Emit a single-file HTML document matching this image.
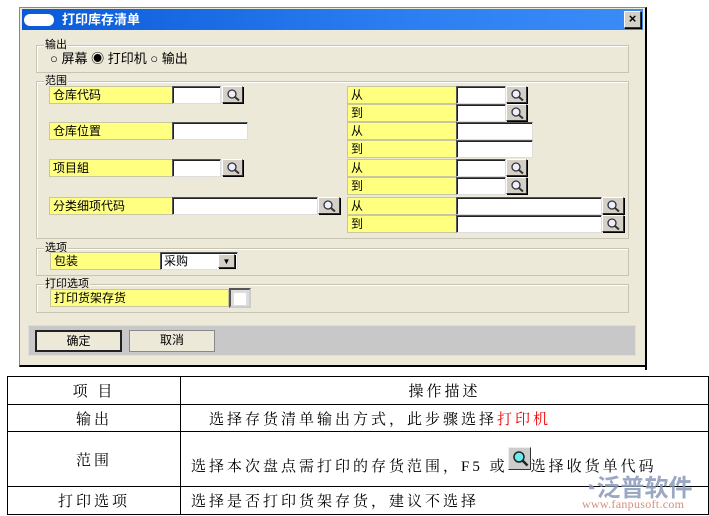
<!DOCTYPE html><html><head><meta charset="utf-8"><style>
*{margin:0;padding:0;box-sizing:border-box}
body{width:709px;height:516px;background:#fff;position:relative;overflow:hidden;font-family:"Liberation Sans","Noto Sans CJK SC",sans-serif;font-size:12px;color:#000}
.a{position:absolute}
.dlg{left:19px;top:7px;width:628px;height:360px;background:#ece9d8;border:1px solid #888;border-right:2px solid #000;border-bottom:2px solid #000}
.title{left:22px;top:9px;width:621px;height:21px;background:linear-gradient(90deg,#0a5ad8,#2b7ef0 60%,#3a8cf8);color:#fff;font-weight:bold;font-size:13px;line-height:21px}
.grp{border:1px solid #c8c4b4;box-shadow:inset 1px 1px 0 #fff}
.lg{background:#ece9d8;padding:0 1px;line-height:12px;font-size:11px}
.y{background:#ffff80;border:1px solid #c8c8a0;line-height:16px;padding-left:3px;font-size:12px}
.in{background:#fff;border:1px solid #555;border-right-color:#ddd;border-bottom-color:#ddd;box-shadow:inset 1px 1px 0 #222}
.sb{background:#d4d0c8;border:1px solid #333;border-left-color:#fff;border-top-color:#fff;box-shadow:1px 1px 0 #000}
.sb svg{position:absolute;left:3px;top:2px}
.btn{background:#ece9d8;border:1px solid #888;text-align:center;line-height:19px;font-size:12px}
table{position:absolute;left:7px;top:376px;width:702px;border-collapse:collapse;font-family:"Liberation Serif","Noto Serif CJK SC",serif;font-size:15px;letter-spacing:3px}
td{border:1.5px solid #000;text-align:center;padding:0}
</style></head><body>
<div class="a dlg"></div>
<div class="a title"><span class="a" style="left:2px;top:5px;width:30px;height:12px;background:#fff;border-radius:6px"></span><span class="a" style="left:40px;top:0">打印库存清单</span></div>
<div class="a sb" style="left:624px;top:11px;width:17px;height:17px;text-align:center;line-height:14px;font-weight:bold;font-size:13px">×</div>

<div class="a grp" style="left:36px;top:45px;width:593px;height:28px"></div>
<div class="a lg" style="left:44px;top:39px">输出</div>
<div class="a" style="left:50px;top:51px;font-size:13px;line-height:15px">○ 屏幕 ◉ 打印机 ○ 输出</div>

<div class="a grp" style="left:36px;top:81px;width:593px;height:158px"></div>
<div class="a lg" style="left:44px;top:75px">范围</div>

<div class="a y" style="left:49px;top:86px;width:124px;height:18px">仓库代码</div>
<div class="a in" style="left:172px;top:86px;width:49px;height:18px"></div>
<div class="a sb" style="left:222px;top:86px;width:21px;height:17px"><svg width="14" height="12"><circle cx="6" cy="5" r="4" fill="#eef" stroke="#333" stroke-width="1.3"/><path d="M9 8l4 3.5" stroke="#333" stroke-width="2"/></svg></div>
<div class="a y" style="left:49px;top:122px;width:124px;height:18px">仓库位置</div>
<div class="a in" style="left:172px;top:122px;width:76px;height:18px"></div>
<div class="a y" style="left:49px;top:159px;width:124px;height:18px">项目組</div>
<div class="a in" style="left:172px;top:159px;width:49px;height:18px"></div>
<div class="a sb" style="left:222px;top:159px;width:21px;height:17px"><svg width="14" height="12"><circle cx="6" cy="5" r="4" fill="#eef" stroke="#333" stroke-width="1.3"/><path d="M9 8l4 3.5" stroke="#333" stroke-width="2"/></svg></div>
<div class="a y" style="left:49px;top:197px;width:124px;height:18px">分类细项代码</div>
<div class="a in" style="left:172px;top:197px;width:146px;height:18px"></div>
<div class="a sb" style="left:318px;top:197px;width:22px;height:17px"><svg width="14" height="12"><circle cx="6" cy="5" r="4" fill="#eef" stroke="#333" stroke-width="1.3"/><path d="M9 8l4 3.5" stroke="#333" stroke-width="2"/></svg></div>

<div class="a y" style="left:347px;top:86px;width:110px;height:18px">从</div>
<div class="a y" style="left:347px;top:104px;width:110px;height:18px">到</div>
<div class="a y" style="left:347px;top:122px;width:110px;height:18px">从</div>
<div class="a y" style="left:347px;top:140px;width:110px;height:18px">到</div>
<div class="a y" style="left:347px;top:159px;width:110px;height:18px">从</div>
<div class="a y" style="left:347px;top:177px;width:110px;height:18px">到</div>
<div class="a y" style="left:347px;top:197px;width:110px;height:18px">从</div>
<div class="a y" style="left:347px;top:215px;width:110px;height:18px">到</div>
<div class="a in" style="left:456px;top:86px;width:50px;height:18px"></div>
<div class="a in" style="left:456px;top:104px;width:50px;height:18px"></div>
<div class="a in" style="left:456px;top:122px;width:77px;height:18px"></div>
<div class="a in" style="left:456px;top:140px;width:77px;height:18px"></div>
<div class="a in" style="left:456px;top:159px;width:50px;height:18px"></div>
<div class="a in" style="left:456px;top:177px;width:50px;height:18px"></div>
<div class="a in" style="left:456px;top:197px;width:146px;height:18px"></div>
<div class="a in" style="left:456px;top:215px;width:146px;height:18px"></div>
<div class="a sb" style="left:506px;top:86px;width:21px;height:17px"><svg width="14" height="12"><circle cx="6" cy="5" r="4" fill="#eef" stroke="#333" stroke-width="1.3"/><path d="M9 8l4 3.5" stroke="#333" stroke-width="2"/></svg></div>
<div class="a sb" style="left:506px;top:104px;width:21px;height:17px"><svg width="14" height="12"><circle cx="6" cy="5" r="4" fill="#eef" stroke="#333" stroke-width="1.3"/><path d="M9 8l4 3.5" stroke="#333" stroke-width="2"/></svg></div>
<div class="a sb" style="left:506px;top:159px;width:21px;height:17px"><svg width="14" height="12"><circle cx="6" cy="5" r="4" fill="#eef" stroke="#333" stroke-width="1.3"/><path d="M9 8l4 3.5" stroke="#333" stroke-width="2"/></svg></div>
<div class="a sb" style="left:506px;top:177px;width:21px;height:17px"><svg width="14" height="12"><circle cx="6" cy="5" r="4" fill="#eef" stroke="#333" stroke-width="1.3"/><path d="M9 8l4 3.5" stroke="#333" stroke-width="2"/></svg></div>
<div class="a sb" style="left:602px;top:197px;width:22px;height:17px"><svg width="14" height="12"><circle cx="6" cy="5" r="4" fill="#eef" stroke="#333" stroke-width="1.3"/><path d="M9 8l4 3.5" stroke="#333" stroke-width="2"/></svg></div>
<div class="a sb" style="left:602px;top:215px;width:22px;height:17px"><svg width="14" height="12"><circle cx="6" cy="5" r="4" fill="#eef" stroke="#333" stroke-width="1.3"/><path d="M9 8l4 3.5" stroke="#333" stroke-width="2"/></svg></div>

<div class="a grp" style="left:36px;top:248px;width:593px;height:28px"></div>
<div class="a lg" style="left:44px;top:242px">选项</div>
<div class="a y" style="left:50px;top:252px;width:111px;height:18px">包装</div>
<div class="a in" style="left:160px;top:252px;width:78px;height:18px;line-height:16px;padding-left:3px">采购</div>
<div class="a sb" style="left:218px;top:254px;width:17px;height:14px;font-size:8px;text-align:center;line-height:13px">▼</div>

<div class="a grp" style="left:36px;top:284px;width:593px;height:29px"></div>
<div class="a lg" style="left:44px;top:278px">打印选项</div>
<div class="a y" style="left:50px;top:289px;width:179px;height:18px">打印货架存货</div>
<div class="a" style="left:229px;top:288px;width:22px;height:20px;border:2px solid #555;border-right-color:#ccc;border-bottom-color:#ccc;background:#ddd"><div class="a" style="left:3px;top:3px;width:12px;height:12px;background:#fff"></div></div>

<div class="a" style="left:28px;top:325px;width:608px;height:31px;background:#c8c8c8;border:1px solid #ddd"></div>
<div class="a btn" style="left:35px;top:330px;width:87px;height:22px;border:2px solid #222">确定</div>
<div class="a btn" style="left:129px;top:330px;width:86px;height:22px">取消</div>
<div class="a" style="left:645px;top:349px;width:2px;height:21px;background:#000"></div>

<table>
<tr style="height:28px"><td style="width:173px">项 目</td><td>操作描述</td></tr>
<tr style="height:27px"><td>输出</td><td style="text-align:left;padding-left:28px">选择存货清单输出方式，此步骤选择<span style="color:#e00">打印机</span></td></tr>
<tr style="height:55px"><td>范围</td><td style="text-align:left;padding-left:10px;vertical-align:bottom;padding-bottom:10px">选择本次盘点需打印的存货范围，F5 或<span style="display:inline-block;width:23px;height:23px;background:#ccc;border:1px solid #333;border-left-color:#eee;border-top-color:#eee;vertical-align:1px;position:relative"><svg width="20" height="20" style="position:absolute;left:1px;top:1px"><circle cx="9" cy="8" r="5" fill="#6ee" stroke="#222" stroke-width="1.5"/><path d="M12.5 11.5l5 5" stroke="#222" stroke-width="2.5"/></svg></span>选择收货单代码</td></tr>
<tr style="height:28px"><td>打印选项</td><td style="text-align:left;padding-left:10px">选择是否打印货架存货，建议不选择</td></tr>
</table>
<div class="a" style="left:582px;top:468px;font-size:24px;color:#8a9ab8;font-weight:bold;opacity:.85">◔泛普软件</div>
<div class="a" style="left:582px;top:497px;font-size:12px;color:#d09080;font-family:'Liberation Serif',serif;letter-spacing:.3px">www.fanpusoft.com</div>
</body></html>
